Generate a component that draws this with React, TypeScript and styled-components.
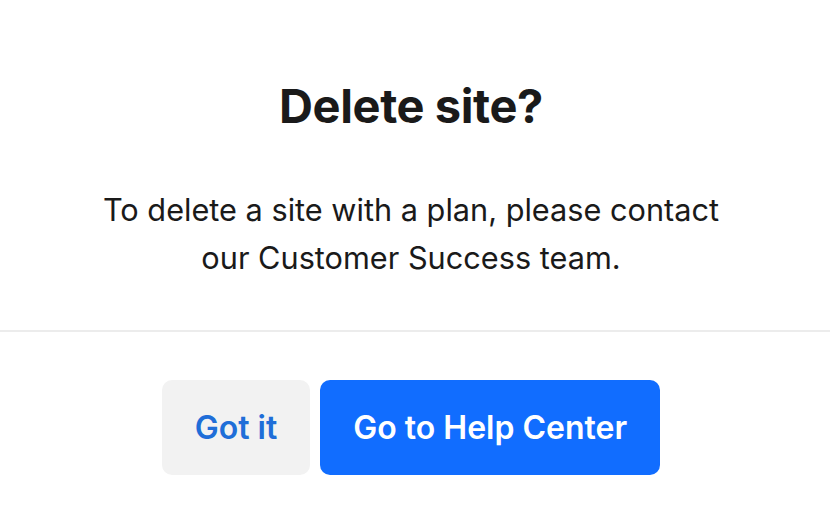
import React from "react";
import styled, { createGlobalStyle } from "styled-components";

const Global = createGlobalStyle`
  html, body { margin: 0; padding: 0; background: #ffffff; }
  body { font-family: Inter, "Noto Sans", sans-serif; -webkit-font-smoothing: antialiased; }
`;

const Dialog = styled.div`
  width: 830px;
  height: 522px;
  display: flex;
  flex-direction: column;
  background: #ffffff;
  overflow: hidden;
`;

const Content = styled.div`
  display: flex;
  flex-direction: column;
  align-items: center;
  padding: 78px 48px 48px 40px;
`;

const Title = styled.h1`
  margin: 0;
  font-family: Inter, "Noto Sans", sans-serif;
  font-size: 47px;
  line-height: 56px;
  font-weight: 700;
  letter-spacing: -0.4px;
  color: #1a1a1a;
`;

const Body = styled.p`
  margin: 52px 0 0;
  font-family: Inter, "Noto Sans", sans-serif;
  font-size: 30.7px;
  line-height: 48px;
  font-weight: 400;
  color: #1a1a1a;
  text-align: center;
  max-width: 720px;
`;

const Divider = styled.hr`
  margin: 0;
  border: 0;
  height: 2px;
  background: #ececec;
  width: 100%;
`;

const Footer = styled.div`
  display: flex;
  justify-content: center;
  gap: 10px;
  padding: 48px 8px 0 0;
`;

const Button = styled.button<{ $primary?: boolean }>`
  height: 95px;
  padding: 0 33px;
  border: 0;
  border-radius: 10px;
  font-family: Inter, "Noto Sans", sans-serif;
  font-size: 32px;
  font-weight: 600;
  cursor: pointer;
  background: ${(p) => (p.$primary ? "#116dff" : "#f2f2f2")};
  color: ${(p) => (p.$primary ? "#ffffff" : "#1f6ed8")};
`;

export default function App() {
  return (
    <>
      <Global />
      <Dialog>
        <Content>
          <Title>Delete site?</Title>
          <Body>
            To delete a site with a plan, please contact
            <br />
            our Customer Success team.
          </Body>
        </Content>
        <Divider />
        <Footer>
          <Button>Got it</Button>
          <Button $primary>Go to Help Center</Button>
        </Footer>
      </Dialog>
    </>
  );
}
